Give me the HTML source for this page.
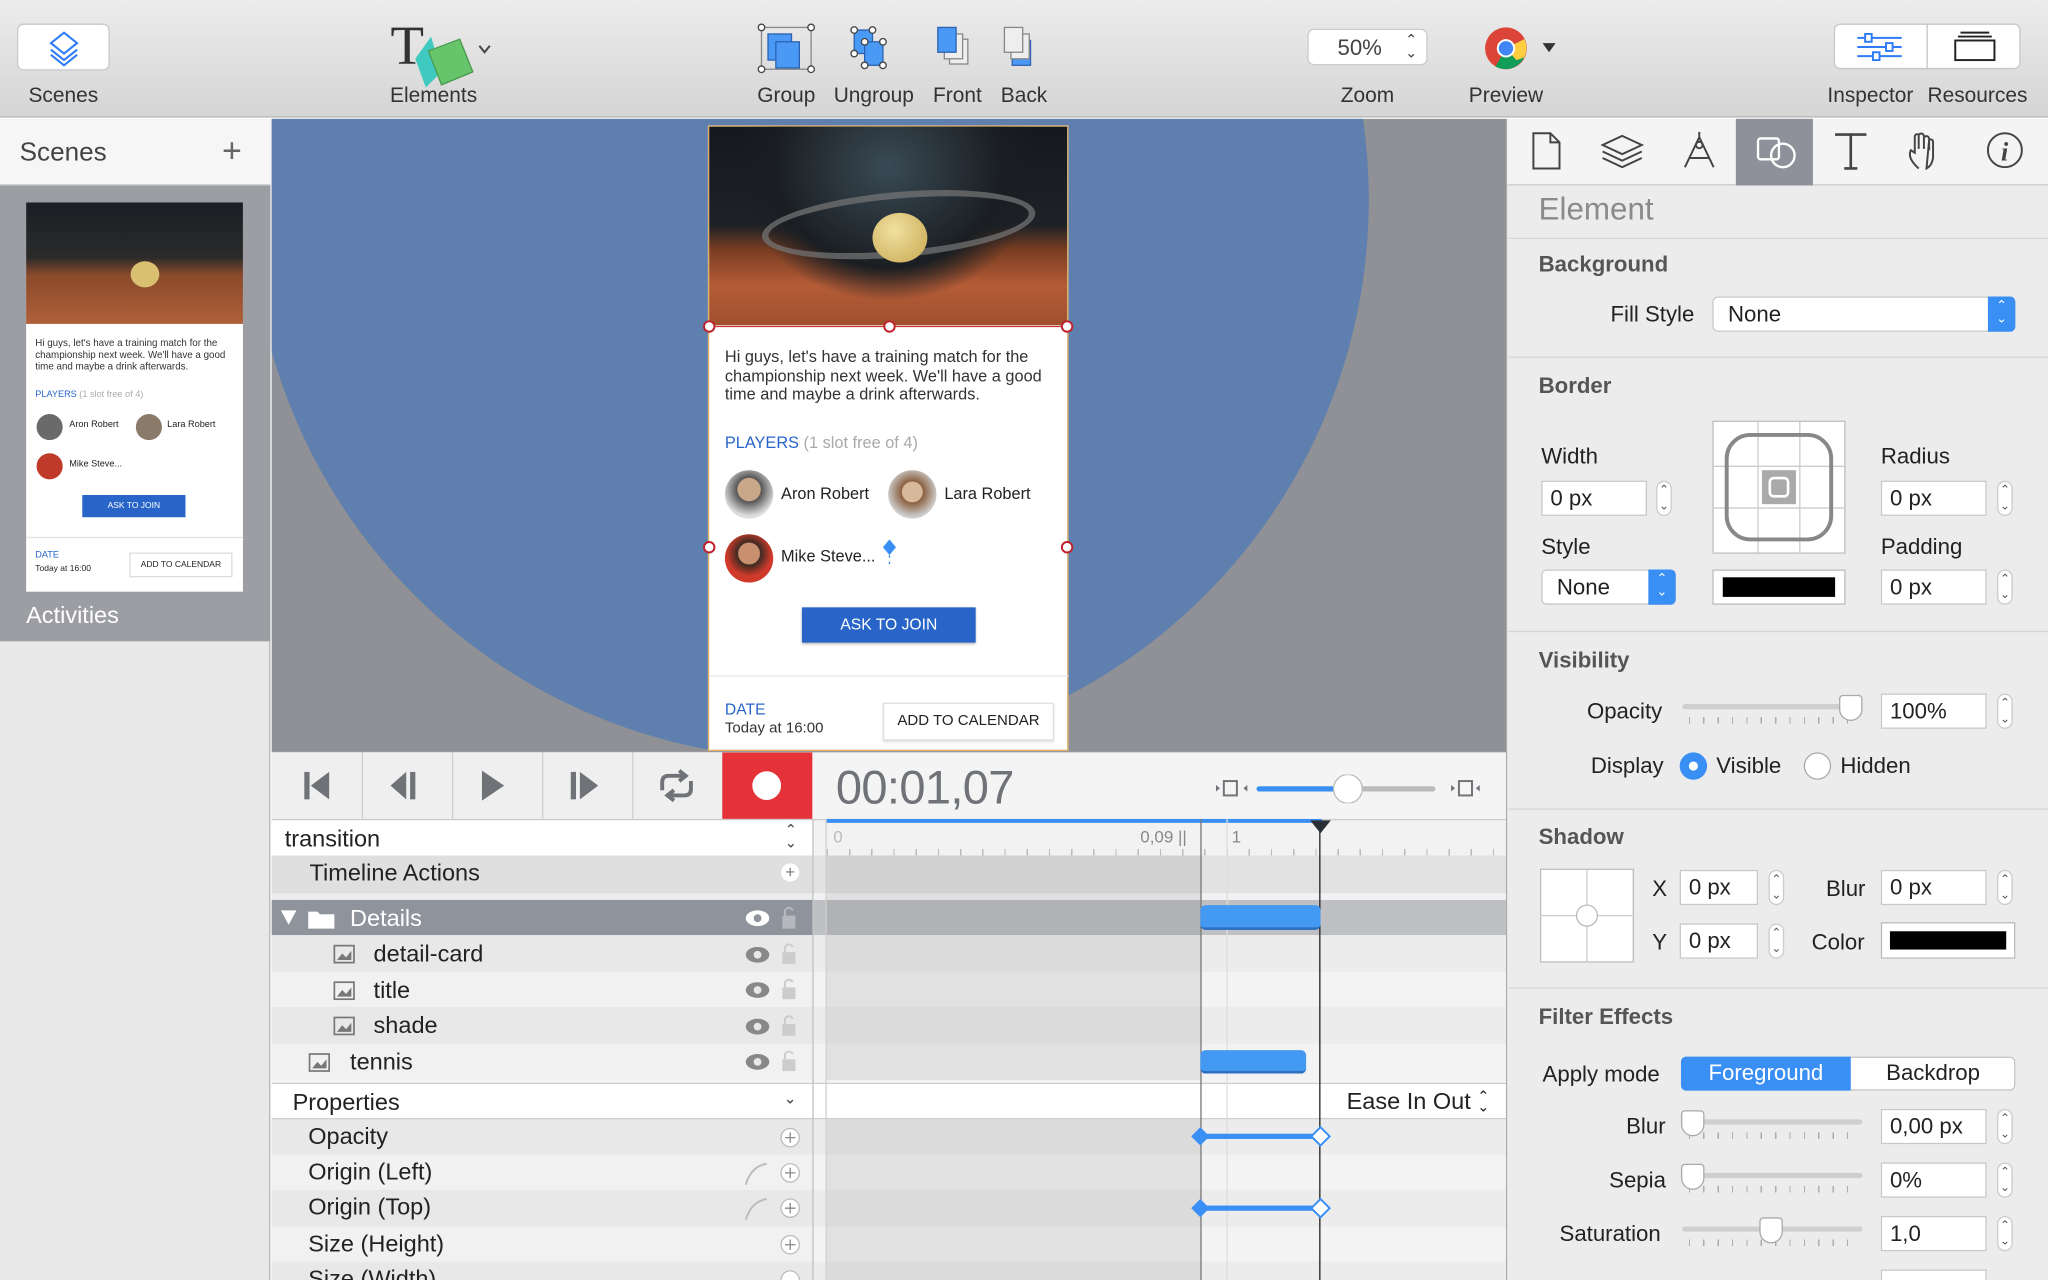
<!DOCTYPE html><html><head><meta charset="utf-8"><style>
*{box-sizing:border-box;margin:0;padding:0}
body{width:2048px;height:1280px;overflow:hidden;background:#fff;font-family:"Liberation Sans",sans-serif;color:#222}
#w{position:absolute;left:0;top:0;width:1568px;height:980px;transform:scale(1.306122);transform-origin:0 0;overflow:hidden}
.a{position:absolute}
.lbl{position:absolute;font-size:16px;color:#333;text-align:center}
.row{position:absolute;left:208px;width:414px;font-size:18px;color:#222}
.tr{position:absolute;left:623px;width:530px}
.ins{font-size:17px;color:#222;position:absolute}
.h{font-size:17px;font-weight:bold;color:#555;position:absolute;left:1178px}
.inp{position:absolute;background:#fff;border:1px solid #c8c8c8;font-size:17px;padding:3px 6px;height:27px}
.step{position:absolute;width:12px;height:27px;border:1px solid #ccc;border-radius:6px;background:#fff;font-size:9px;line-height:12px;text-align:center;color:#555}
.sep{position:absolute;left:1155px;width:413px;height:1px;background:#d6d6d6}
.sl{position:absolute;height:4px;background:#cfcfcf;border-radius:2px}
.ticks{position:absolute;height:5px;background:repeating-linear-gradient(90deg,#aaa 0 1px,transparent 1px 11px)}
.knob{position:absolute;width:18px;height:20px;background:#fff;border:1px solid #aaa;border-radius:3px 3px 9px 9px}
</style></head><body><div id="w">
<!-- toolbar -->
<div class="a" style="left:0;top:0;width:1568px;height:90px;background:linear-gradient(#ececec,#d5d5d5);border-bottom:1px solid #b3b3b3"></div>
<div class="a" style="left:13px;top:18px;width:71px;height:36px;background:#fff;border:1px solid #c9c9c9;border-radius:5px"></div>
<svg class="a" style="left:33px;top:22px" width="32" height="30" viewBox="0 0 32 30"><g fill="none" stroke="#2f7cf6" stroke-width="1.6"><path d="M16 3 L26 11 L16 19 L6 11Z"/><path d="M6 16 L16 24 L26 16"/><path d="M6 20 L16 28 L26 20"/></g></svg>
<div class="lbl" style="left:0;width:97px;top:65px">Scenes</div>
<div class="a" style="left:299px;top:12px;font-family:'Liberation Serif',serif;font-size:42px;color:#333">T</div>
<svg class="a" style="left:310px;top:25px" width="70" height="45"><path d="M8 20 L20 3 L28 30 L16 42Z" fill="#3fc9c0"/><path d="M18 14 L42 5 L52 30 L28 40Z" fill="#66c46a" stroke="#4a9a4d"/><path d="M57 10 L61 15 L65 10" fill="none" stroke="#444" stroke-width="1.5"/></svg>
<div class="lbl" style="left:290px;width:84px;top:65px">Elements</div>
<svg class="a" style="left:580px;top:18px" width="240" height="40"><rect x="3" y="3" width="38" height="32" fill="none" stroke="#888"/><rect x="8" y="8" width="18" height="20" fill="#4a9af5" stroke="#2d62b0"/><rect x="14" y="14" width="18" height="20" fill="#4a9af5" stroke="#2d62b0"/><g fill="#fff" stroke="#444"><circle cx="3" cy="3" r="2.5"/><circle cx="41" cy="3" r="2.5"/><circle cx="3" cy="35" r="2.5"/><circle cx="41" cy="35" r="2.5"/></g>
<rect x="74" y="5" width="14" height="18" fill="#4a9af5" stroke="#2d62b0"/><rect x="82" y="14" width="14" height="18" fill="#4a9af5" stroke="#2d62b0"/><g fill="#fff" stroke="#444"><circle cx="74" cy="5" r="2.5"/><circle cx="88" cy="5" r="2.5"/><circle cx="74" cy="23" r="2.5"/><circle cx="82" cy="14" r="2.5"/><circle cx="96" cy="14" r="2.5"/><circle cx="82" cy="32" r="2.5"/><circle cx="96" cy="32" r="2.5"/></g>
<rect x="147" y="12" width="14" height="19" fill="#eee" stroke="#888"/><rect x="143" y="8" width="14" height="19" fill="#eee" stroke="#888"/><rect x="138" y="3" width="14" height="19" fill="#4a9af5" stroke="#2d62b0"/>
<rect x="195" y="13" width="14" height="19" fill="#4a9af5" stroke="#2d62b0"/><rect x="194" y="8" width="14" height="19" fill="#eee" stroke="#888"/><rect x="189" y="3" width="14" height="19" fill="#eee" stroke="#888"/></svg>
<div class="lbl" style="left:578px;width:48px;top:65px">Group</div>
<div class="lbl" style="left:636px;width:66px;top:65px">Ungroup</div>
<div class="lbl" style="left:711px;width:44px;top:65px">Front</div>
<div class="lbl" style="left:764px;width:40px;top:65px">Back</div>
<div class="a" style="left:1001px;top:22px;width:92px;height:28px;background:#fff;border:1px solid #ccc;border-radius:5px;font-size:17px;color:#444;padding:4px 0 0 22px">50% <span style="font-size:11px;position:absolute;right:7px;top:3px;line-height:10px">⌃<br>⌄</span></div>
<div class="lbl" style="left:1015px;width:64px;top:65px">Zoom</div>
<svg class="a" style="left:1135px;top:20px" width="60" height="36"><circle cx="18" cy="17" r="16" fill="#db4437"/><path d="M18 17 L32 10 A16 16 0 0 1 10 31Z" fill="#0f9d58"/><path d="M18 17 L32 10 A16 16 0 0 1 32 24 L26 26Z" fill="#ffcd40"/><circle cx="18" cy="17" r="7" fill="#fff"/><circle cx="18" cy="17" r="5.5" fill="#4285f4"/><path d="M46 13 L56 13 L51 20Z" fill="#333"/></svg>
<div class="lbl" style="left:1118px;width:70px;top:65px">Preview</div>
<div class="a" style="left:1404px;top:18px;width:143px;height:35px;background:#fff;border:1px solid #c7c7c7;border-radius:5px"></div>
<div class="a" style="left:1475px;top:18px;width:1px;height:35px;background:#c7c7c7"></div>
<svg class="a" style="left:1420px;top:24px" width="120" height="24"><g stroke="#2f7cf6" stroke-width="1.5" fill="#fff"><path d="M2 5H36M2 12H36M2 19H36"/><rect x="8" y="2" width="5" height="6"/><rect x="24" y="9" width="5" height="6"/><rect x="14" y="16" width="5" height="6"/></g><g stroke="#222" stroke-width="1.5" fill="none"><rect x="77" y="7" width="30" height="15"/><path d="M79 4H105M81 1H103"/></g></svg>
<div class="lbl" style="left:1396px;width:72px;top:65px">Inspector</div>
<div class="lbl" style="left:1474px;width:80px;top:65px">Resources</div>

<!-- left sidebar -->
<div class="a" style="left:0;top:91px;width:207px;height:889px;background:#e8e8e8;border-right:1px solid #b8b8b8"></div>
<div class="a" style="left:0;top:91px;width:207px;height:51px;background:#f6f6f6;border-bottom:1px solid #ccc"></div>
<div class="a" style="left:15px;top:106px;font-size:20px;color:#444">Scenes</div>
<div class="a" style="left:170px;top:100px;font-size:26px;color:#666;font-weight:300">+</div>
<div class="a" style="left:0;top:142px;width:207px;height:349px;background:#9c9ea3"></div>
<div class="a" style="left:20px;top:155px;width:166px;height:298px;background:#fff"></div>
<div class="a" style="left:20px;top:155px;width:166px;height:93px;background:linear-gradient(#1b1f24 0,#2a2a2a 45%,#8a4a2a 60%,#b0603a 100%)"></div>
<div class="a" style="left:100px;top:200px;width:22px;height:20px;border-radius:50%;background:#d8c070"></div>
<div class="a" style="left:27px;top:258px;width:150px;font-size:7.5px;line-height:9px;color:#333">Hi guys, let's have a training match for the championship next week. We'll have a good time and maybe a drink afterwards.</div>
<div class="a" style="left:27px;top:299px;font-size:7px;color:#2965c9">PLAYERS <span style="color:#aaa">(1 slot free of 4)</span></div>
<div class="a" style="left:28px;top:317px;width:20px;height:20px;border-radius:50%;background:#6a6a6a"></div>
<div class="a" style="left:53px;top:322px;font-size:7px">Aron Robert</div>
<div class="a" style="left:104px;top:317px;width:20px;height:20px;border-radius:50%;background:#8a7a6a"></div>
<div class="a" style="left:128px;top:322px;font-size:7px">Lara Robert</div>
<div class="a" style="left:28px;top:347px;width:20px;height:20px;border-radius:50%;background:#c03a2a"></div>
<div class="a" style="left:53px;top:352px;font-size:7px">Mike Steve...</div>
<div class="a" style="left:63px;top:379px;width:79px;height:17px;background:#2965c9;color:#fff;font-size:6.5px;text-align:center;line-height:17px">ASK TO JOIN</div>
<div class="a" style="left:20px;top:411px;width:166px;height:1px;background:#e4e4e4"></div>
<div class="a" style="left:27px;top:422px;font-size:7px;color:#2965c9">DATE</div>
<div class="a" style="left:27px;top:432px;font-size:6.5px">Today at 16:00</div>
<div class="a" style="left:99px;top:423px;width:79px;height:19px;border:1px solid #ddd;font-size:6.5px;text-align:center;line-height:17px">ADD TO CALENDAR</div>
<div class="a" style="left:20px;top:461px;font-size:18px;color:#fff">Activities</div>

<!-- canvas -->
<div class="a" style="left:208px;top:91px;width:945px;height:484px;background:#8f9196;overflow:hidden">
<div class="a" style="left:-16px;top:-366px;width:856px;height:856px;border-radius:50%;background:#5f7faf"></div>
<div class="a" style="left:334px;top:5px;width:276px;height:479px;background:#fff;border:1px solid #e0b060"></div>
<div class="a" style="left:335px;top:6px;width:274px;height:152px;background:radial-gradient(ellipse at 50% 20%,#3a4a55 0,#1a1e22 45%,transparent 60%),linear-gradient(#15191d 0,#1e2226 50%,#7a3d22 62%,#b45c36 80%,#a0502e 100%)"></div>
<div class="a" style="left:375px;top:56px;width:210px;height:50px;border:5px solid #777;border-radius:50%;transform:rotate(-5deg);opacity:.7"></div>
<div class="a" style="left:460px;top:72px;width:42px;height:38px;border-radius:50%;background:radial-gradient(circle at 40% 35%,#f0e0a0,#c8a850)"></div>
</div>
<svg class="a" style="left:536px;top:242px" width="290" height="190"><path d="M7 8H281M145 8V8" stroke="#c33" fill="none"/><g fill="#fff" stroke="#c0202a" stroke-width="1.5"><circle cx="7" cy="8" r="4"/><circle cx="145" cy="8" r="4"/><circle cx="281" cy="8" r="4"/><circle cx="7" cy="177" r="4"/><circle cx="281" cy="177" r="4"/></g><path d="M145 178V222" stroke="#3a8ff5" stroke-dasharray="2 3"/><path d="M145 171 L150 177 L145 183 L140 177Z" fill="#3a8ff5"/></svg>
<div class="a" style="left:555px;top:266px;width:250px;font-size:12.5px;line-height:14.5px;color:#333">Hi guys, let's have a training match for the championship next week. We'll have a good time and maybe a drink afterwards.</div>
<div class="a" style="left:555px;top:332px;font-size:12.5px;color:#2965c9">PLAYERS <span style="color:#aaa">(1 slot free of 4)</span></div>
<div class="a" style="left:555px;top:360px;width:37px;height:37px;border-radius:50%;background:radial-gradient(circle at 50% 40%,#c9a88a 0 30%,#555 32%,#ddd 70%)"></div>
<div class="a" style="left:598px;top:371px;font-size:12.5px">Aron Robert</div>
<div class="a" style="left:680px;top:360px;width:37px;height:37px;border-radius:50%;background:radial-gradient(circle at 50% 45%,#d8b89a 0 28%,#8a6040 30%,#cfcfcf 70%)"></div>
<div class="a" style="left:723px;top:371px;font-size:12.5px">Lara Robert</div>
<div class="a" style="left:555px;top:409px;width:37px;height:37px;border-radius:50%;background:radial-gradient(circle at 50% 40%,#c99070 0 28%,#3a2a22 30%,#d03a2a 60%)"></div>
<div class="a" style="left:598px;top:419px;font-size:12.5px">Mike Steve...</div>
<div class="a" style="left:614px;top:465px;width:133px;height:27px;background:#2965c9;color:#fff;font-size:12px;text-align:center;line-height:27px;box-shadow:0 1px 2px rgba(0,0,0,.3)">ASK TO JOIN</div>
<div class="a" style="left:543px;top:517px;width:275px;height:1px;background:#e6e6e6"></div>
<div class="a" style="left:555px;top:536px;font-size:12px;color:#2965c9">DATE</div>
<div class="a" style="left:555px;top:552px;font-size:11.5px;color:#333">Today at 16:00</div>
<div class="a" style="left:676px;top:538px;width:131px;height:29px;border:1px solid #e0e0e0;font-size:11.5px;text-align:center;line-height:27px;box-shadow:0 1px 2px rgba(0,0,0,.15)">ADD TO CALENDAR</div>

<!-- timeline controls -->
<div class="a" style="left:208px;top:575px;width:945px;height:405px;background:#f4f4f4;border-top:1px solid #999"></div>
<div class="a" style="left:208px;top:576px;width:414px;height:51px;background:#efefef"></div>
<svg class="a" style="left:208px;top:576px" width="414" height="51"><g stroke="#cfcfcf"><path d="M69.5 0V51M138.5 0V51M207.5 0V51M276.5 0V51M345.5 0V51"/></g><g fill="#6f7277"><rect x="25" y="15" width="4" height="21"/><path d="M30 25.5 L44 15V36Z"/><path d="M91 25.5 L103 15V36Z"/><rect x="106" y="15" width="4" height="21"/><path d="M161 14V37L178 25.5Z"/><rect x="229" y="15" width="4" height="21"/><path d="M236 15V36L250 25.5Z"/></g><g fill="none" stroke="#6f7277" stroke-width="3"><path d="M299 29V23Q299 18 304 18H316M312 14L317 18L312 22M321 22V28Q321 33 316 33H304M308 29L303 33L308 37"/></g><rect x="345" y="0" width="69" height="51" fill="#e53238"/><circle cx="379" cy="25.5" r="11" fill="#fff"/></svg>
<div class="a" style="left:640px;top:582px;font-size:36px;color:#6f7277;letter-spacing:-0.5px">00:01,07</div>
<svg class="a" style="left:928px;top:593px" width="205" height="22"><g fill="none" stroke="#6f7277" stroke-width="1.5"><rect x="9" y="5" width="10" height="11"/><rect x="189" y="5" width="10" height="11"/></g><path d="M3 8L6 10.5L3 13ZM27 8L24 10.5L27 13ZM183 8L186 10.5L183 13ZM205 8L202 10.5L205 13Z" fill="#6f7277"/><rect x="34" y="9" width="70" height="4" rx="2" fill="#3a8ff5"/><rect x="104" y="9" width="67" height="4" rx="2" fill="#bbb"/><circle cx="104" cy="11" r="11" fill="#fff" stroke="#bbb"/></svg>

<!-- left list -->
<div class="row" style="top:627px;height:28px;background:#fff;border-top:1px solid #ccc;padding:4px 10px">transition<span style="position:absolute;right:12px;top:3px;font-size:11px;line-height:10px;color:#444">⌃<br>⌄</span></div>
<div class="row" style="top:655px;height:29px;background:#dfdfdf;padding:3px 29px">Timeline Actions<span class="a" style="right:10px;top:6px;width:14px;height:14px;border-radius:50%;background:#fff;font-size:13px;line-height:14px;text-align:center;color:#777">+</span></div>
<div class="row" style="top:684px;height:5px;background:#ececec"></div>
<div class="row" style="top:689px;height:27px;background:#8e939c;color:#fff;padding:4px 60px">Details</div>
<svg class="a" style="left:214px;top:694px" width="50" height="18"><path d="M1 3H13L7 14Z" fill="#fff"/><path d="M22 4H29L31 6H42V17H22Z" fill="#fff"/></svg>
<svg class="a" style="left:568px;top:691px" width="50" height="24"><ellipse cx="12" cy="12" rx="9" ry="6" fill="#fff"/><circle cx="12" cy="12" r="3" fill="#8e939c"/><rect x="31" y="10" width="10" height="10" fill="#b5b8bd"/><path d="M33 10V6Q36 2 39 6" fill="none" stroke="#b5b8bd" stroke-width="1.5"/></svg>
<div class="row" style="top:716px;height:28px;background:#e8e8e8;padding:4px 78px">detail-card</div>
<div class="row" style="top:744px;height:27px;background:#f1f1f1;padding:4px 78px">title</div>
<div class="row" style="top:771px;height:28px;background:#e8e8e8;padding:4px 78px">shade</div>
<div class="row" style="top:799px;height:28px;background:#f1f1f1;padding:4px 60px">tennis</div>
<svg class="a" style="left:230px;top:716px" width="400" height="112"><g fill="none" stroke="#777" stroke-width="1.3"><rect x="26" y="8" width="15" height="13"/><rect x="26" y="36" width="15" height="13"/><rect x="26" y="63" width="15" height="13"/><rect x="7" y="91" width="15" height="13"/></g><g fill="#777"><path d="M28 19L32 14L35 17L39 12V19Z"/><path d="M28 47L32 42L35 45L39 40V47Z"/><path d="M28 74L32 69L35 72L39 67V74Z"/><path d="M9 102L13 97L16 100L20 95V102Z"/></g>
<g fill="#888"><ellipse cx="350" cy="15" rx="9" ry="6"/><ellipse cx="350" cy="42" rx="9" ry="6"/><ellipse cx="350" cy="70" rx="9" ry="6"/><ellipse cx="350" cy="97" rx="9" ry="6"/></g><g fill="#e8e8e8"><circle cx="350" cy="15" r="3"/><circle cx="350" cy="42" r="3"/><circle cx="350" cy="70" r="3"/><circle cx="350" cy="97" r="3"/></g>
<g fill="#ccc"><rect x="369" y="13" width="10" height="9"/><rect x="369" y="40" width="10" height="9"/><rect x="369" y="68" width="10" height="9"/><rect x="369" y="95" width="10" height="9"/></g><g fill="none" stroke="#ccc" stroke-width="1.5"><path d="M371 13V9Q374 5 377 9M371 40V36Q374 32 377 36M371 68V64Q374 60 377 64M371 95V91Q374 87 377 91"/></g></svg>
<div class="row" style="top:829px;height:28px;background:#fff;border-top:1px solid #ccc;border-bottom:1px solid #ccc;padding:4px 16px">Properties<span style="position:absolute;right:12px;top:4px;font-size:12px;color:#444">⌄</span></div>
<div class="row" style="top:857px;height:27px;background:#e8e8e8;padding:3px 28px">Opacity</div>
<div class="row" style="top:884px;height:27px;background:#f1f1f1;padding:3px 28px">Origin (Left)</div>
<div class="row" style="top:911px;height:28px;background:#e8e8e8;padding:3px 28px">Origin (Top)</div>
<div class="row" style="top:939px;height:27px;background:#f1f1f1;padding:3px 28px">Size (Height)</div>
<div class="row" style="top:966px;height:27px;background:#e8e8e8;padding:3px 28px">Size (Width)</div>
<svg class="a" style="left:565px;top:857px" width="56" height="123"><g fill="#fff" stroke="#bbb"><circle cx="40" cy="14" r="7"/><circle cx="40" cy="41" r="7"/><circle cx="40" cy="68" r="7"/><circle cx="40" cy="96" r="7"/><circle cx="40" cy="123" r="7"/></g><g stroke="#888"><path d="M36 14H44M40 10V18M36 41H44M40 37V45M36 68H44M40 64V72M36 96H44M40 92V100"/></g><g fill="none" stroke="#bbb" stroke-width="1.5"><path d="M6 50Q10 36 22 34M6 77Q10 63 22 61"/></g></svg>
<div class="a" style="left:622px;top:627px;width:1px;height:353px;background:#bbb"></div>

<!-- right timeline -->
<div class="tr" style="top:627px;height:28px;background:#f2f2f2;border-top:1px solid #ccc"></div>
<div class="a" style="left:632px;top:627px;width:380px;height:3px;background:#3a8ff5"></div>
<div class="a" style="left:638px;top:633px;font-size:13px;color:#bbb">0</div>
<div class="a" style="left:873px;top:633px;font-size:13px;color:#888">0,09 ||</div>
<div class="a" style="left:943px;top:633px;font-size:13px;color:#888">1</div>
<div class="ticks" style="left:633px;top:650px;width:520px;background:repeating-linear-gradient(90deg,#bbb 0 1px,transparent 1px 17px)"></div>
<div class="tr" style="top:655px;height:29px;background:#e2e2e2"></div>
<div class="tr" style="top:684px;height:5px;background:#f2f2f2"></div>
<div class="tr" style="top:689px;height:27px;background:#bec0c4"></div>
<div class="tr" style="top:716px;height:28px;background:#ececec"></div>
<div class="tr" style="top:744px;height:27px;background:#f3f3f3"></div>
<div class="tr" style="top:771px;height:28px;background:#ececec"></div>
<div class="tr" style="top:799px;height:28px;background:#f3f3f3"></div>
<div class="tr" style="top:829px;height:28px;background:#fff;border-top:1px solid #ccc;border-bottom:1px solid #ccc"></div>
<div class="a" style="left:1031px;top:833px;font-size:18px;color:#222">Ease In Out <span style="font-size:11px;display:inline-block;line-height:8px;vertical-align:middle">⌃<br>⌄</span></div>
<div class="tr" style="top:857px;height:27px;background:#ececec"></div>
<div class="tr" style="top:884px;height:27px;background:#f3f3f3"></div>
<div class="tr" style="top:911px;height:28px;background:#ececec"></div>
<div class="tr" style="top:939px;height:27px;background:#f3f3f3"></div>
<div class="tr" style="top:966px;height:27px;background:#ececec"></div>
<div class="a" style="left:632px;top:655px;width:287px;height:172px;background:rgba(0,0,0,.07)"></div>
<div class="a" style="left:632px;top:857px;width:287px;height:123px;background:rgba(0,0,0,.07)"></div>
<div class="a" style="left:632px;top:627px;width:1px;height:353px;background:#d0d0d0"></div>
<div class="a" style="left:939px;top:627px;width:1px;height:353px;background:#ddd"></div>
<div class="a" style="left:919px;top:627px;width:1px;height:353px;background:#777"></div>
<div class="a" style="left:1010px;top:630px;width:1px;height:350px;background:#222"></div>
<svg class="a" style="left:1003px;top:628px" width="16" height="10"><path d="M0 0H16L8 10Z" fill="#2a2e35"/></svg>
<div class="a" style="left:919px;top:693px;width:92px;height:19px;background:#4499f2;border-radius:4px;border-bottom:2px solid #2d6fc0"></div>
<div class="a" style="left:919px;top:804px;width:81px;height:18px;background:#4499f2;border-radius:4px;border-bottom:2px solid #2d6fc0"></div>
<svg class="a" style="left:909px;top:860px" width="115" height="75"><g><rect x="10" y="8" width="92" height="4" fill="#3a8ff5"/><rect x="10" y="63" width="92" height="4" fill="#3a8ff5"/><path d="M10 3L17 10L10 17L3 10Z" fill="#3a8ff5"/><path d="M10 58L17 65L10 72L3 65Z" fill="#3a8ff5"/><path d="M102 3L109 10L102 17L95 10Z" fill="#fff" stroke="#3a8ff5" stroke-width="1.5"/><path d="M102 58L109 65L102 72L95 65Z" fill="#fff" stroke="#3a8ff5" stroke-width="1.5"/></g></svg>
<div class="a" style="left:1153px;top:91px;width:1px;height:889px;background:#aaa"></div>

<!-- inspector -->
<div class="a" style="left:1154px;top:91px;width:414px;height:889px;background:#ececec"></div>
<div class="a" style="left:1154px;top:91px;width:414px;height:51px;background:#f4f4f4;border-bottom:1px solid #ccc"></div>
<div class="a" style="left:1329px;top:91px;width:59px;height:51px;background:#8e9199"></div>
<svg class="a" style="left:1160px;top:97px" width="400" height="40"><g fill="none" stroke="#444" stroke-width="1.5"><path d="M14 5H27L34 12V32H14Z M27 5V12H34"/><path d="M82 7L97 14L82 21L67 14Z M67 19L82 26L97 19 M67 24L82 31L97 24"/><path d="M141 8L130 31M141 8L152 31M141 8V4M134 24H148"/><circle cx="141" cy="14" r="2.5"/><path d="M245 6H269M257 6V32M252 32H262" stroke-width="2"/><path d="M309 32Q300 24 303 18L306 20V8Q306 5 309 6V17M309 6Q312 4 313 7V17M313 8Q316 6 317 9V18M317 10Q320 9 320 12V24Q319 30 315 32Z"/><circle cx="375" cy="18" r="13"/></g><g fill="none" stroke="#fff" stroke-width="1.8"><rect x="186" y="9" width="16" height="16" rx="2"/><circle cx="205" cy="22" r="9"/></g><text x="372" y="26" font-family="Liberation Serif" font-size="20" font-style="italic" font-weight="bold" fill="#444">i</text></svg>
<div class="a" style="left:1178px;top:147px;font-size:24px;color:#8a8a8a">Element</div>
<div class="sep" style="top:182px"></div>
<div class="h" style="top:193px">Background</div>
<div class="ins" style="left:1233px;top:231px">Fill Style</div>
<div class="a" style="left:1311px;top:227px;width:232px;height:27px;background:#fff;border:1px solid #c8c8c8;border-radius:4px;font-size:17px;padding:3px 11px">None<span style="position:absolute;right:-1px;top:-1px;width:21px;height:27px;background:#3a8ff5;border-radius:0 4px 4px 0;color:#fff;font-size:10px;line-height:10px;text-align:center;padding-top:3px">⌃<br>⌄</span></div>
<div class="sep" style="top:273px"></div>
<div class="h" style="top:286px">Border</div>
<div class="ins" style="left:1180px;top:340px">Width</div>
<div class="inp" style="left:1180px;top:368px;width:81px">0 px</div><div class="step" style="left:1268px;top:368px">⌃<br>⌄</div>
<div class="ins" style="left:1180px;top:409px">Style</div>
<div class="a" style="left:1180px;top:436px;width:103px;height:27px;background:#fff;border:1px solid #c8c8c8;border-radius:4px;font-size:17px;padding:3px 11px">None<span style="position:absolute;right:-1px;top:-1px;width:21px;height:27px;background:#3a8ff5;border-radius:0 4px 4px 0;color:#fff;font-size:10px;line-height:10px;text-align:center;padding-top:3px">⌃<br>⌄</span></div>
<svg class="a" style="left:1311px;top:322px" width="102" height="102"><rect x=".5" y=".5" width="101" height="101" fill="#fff" stroke="#bbb"/><g stroke="#ccc" fill="none"><path d="M35 .5V101M67 .5V101M.5 35H101M.5 67H101"/></g><rect x="11" y="11" width="80" height="80" rx="18" fill="none" stroke="#888" stroke-width="3"/><rect x="38" y="38" width="26" height="26" fill="#aaa"/><rect x="44" y="44" width="14" height="14" rx="3" fill="none" stroke="#fff" stroke-width="2"/></svg>
<div class="a" style="left:1311px;top:436px;width:102px;height:27px;background:#fff;border:1px solid #bbb;padding:5px 7px"><div style="height:15px;background:#000"></div></div>
<div class="ins" style="left:1440px;top:340px">Radius</div>
<div class="inp" style="left:1440px;top:368px;width:81px">0 px</div><div class="step" style="left:1529px;top:368px">⌃<br>⌄</div>
<div class="ins" style="left:1440px;top:409px">Padding</div>
<div class="inp" style="left:1440px;top:436px;width:81px">0 px</div><div class="step" style="left:1529px;top:436px">⌃<br>⌄</div>
<div class="sep" style="top:483px"></div>
<div class="h" style="top:496px">Visibility</div>
<div class="ins" style="left:1215px;top:535px">Opacity</div>
<div class="sl" style="left:1288px;top:539px;width:138px"></div><div class="ticks" style="left:1293px;top:549px;width:130px"></div><div class="knob" style="left:1408px;top:532px"></div>
<div class="inp" style="left:1440px;top:531px;width:81px">100%</div><div class="step" style="left:1529px;top:531px">⌃<br>⌄</div>
<div class="ins" style="left:1218px;top:577px">Display</div>
<div class="a" style="left:1286px;top:576px;width:21px;height:21px;border-radius:50%;background:#3a8ff5"><div style="margin:7px;width:7px;height:7px;border-radius:50%;background:#fff"></div></div>
<div class="ins" style="left:1314px;top:577px">Visible</div>
<div class="a" style="left:1381px;top:576px;width:21px;height:21px;border-radius:50%;background:#fff;border:1px solid #aaa"></div>
<div class="ins" style="left:1409px;top:577px">Hidden</div>
<div class="sep" style="top:619px"></div>
<div class="h" style="top:631px">Shadow</div>
<svg class="a" style="left:1179px;top:665px" width="72" height="72"><rect x=".5" y=".5" width="71" height="71" fill="#fff" stroke="#bbb"/><path d="M36 0V72M0 36H72" stroke="#ccc"/><circle cx="36" cy="36" r="8" fill="#fff" stroke="#bbb"/></svg>
<div class="ins" style="left:1265px;top:671px">X</div>
<div class="inp" style="left:1286px;top:666px;width:60px">0 px</div><div class="step" style="left:1354px;top:666px">⌃<br>⌄</div>
<div class="ins" style="left:1265px;top:712px">Y</div>
<div class="inp" style="left:1286px;top:707px;width:60px">0 px</div><div class="step" style="left:1354px;top:707px">⌃<br>⌄</div>
<div class="ins" style="left:1398px;top:671px">Blur</div>
<div class="inp" style="left:1440px;top:666px;width:81px">0 px</div><div class="step" style="left:1529px;top:666px">⌃<br>⌄</div>
<div class="ins" style="left:1387px;top:712px">Color</div>
<div class="a" style="left:1440px;top:706px;width:103px;height:28px;background:#fff;border:1px solid #bbb;padding:6px 6px"><div style="height:14px;background:#000"></div></div>
<div class="sep" style="top:756px"></div>
<div class="h" style="top:769px">Filter Effects</div>
<div class="ins" style="left:1181px;top:813px">Apply mode</div>
<div class="a" style="left:1287px;top:809px;width:256px;height:26px;border:1px solid #c8c8c8;border-radius:4px;background:#fff"></div>
<div class="a" style="left:1287px;top:809px;width:130px;height:26px;background:#3a8ff5;border-radius:4px 0 0 4px;color:#fff;font-size:17px;text-align:center;line-height:26px">Foreground</div>
<div class="a" style="left:1417px;top:809px;width:126px;height:26px;font-size:17px;text-align:center;line-height:26px">Backdrop</div>
<div class="ins" style="left:1245px;top:853px">Blur</div>
<div class="sl" style="left:1288px;top:857px;width:138px"></div><div class="ticks" style="left:1293px;top:867px;width:130px"></div><div class="knob" style="left:1287px;top:850px"></div>
<div class="inp" style="left:1440px;top:849px;width:81px">0,00 px</div><div class="step" style="left:1529px;top:849px">⌃<br>⌄</div>
<div class="ins" style="left:1232px;top:894px">Sepia</div>
<div class="sl" style="left:1288px;top:898px;width:138px"></div><div class="ticks" style="left:1293px;top:908px;width:130px"></div><div class="knob" style="left:1287px;top:891px"></div>
<div class="inp" style="left:1440px;top:890px;width:81px">0%</div><div class="step" style="left:1529px;top:890px">⌃<br>⌄</div>
<div class="ins" style="left:1194px;top:935px">Saturation</div>
<div class="sl" style="left:1288px;top:939px;width:138px"></div><div class="ticks" style="left:1293px;top:949px;width:130px"></div><div class="knob" style="left:1347px;top:932px"></div>
<div class="inp" style="left:1440px;top:931px;width:81px">1,0</div><div class="step" style="left:1529px;top:931px">⌃<br>⌄</div>
<div class="inp" style="left:1440px;top:972px;width:81px"></div>
</div></body></html>
